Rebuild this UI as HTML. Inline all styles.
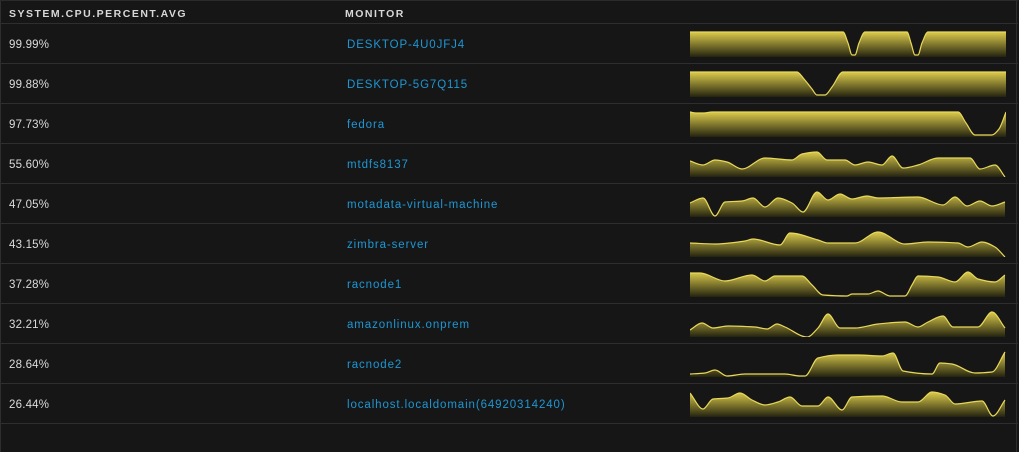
<!DOCTYPE html>
<html><head><meta charset="utf-8"><style>
html,body{margin:0;padding:0;background:#161616;}
body{width:1019px;height:452px;position:relative;overflow:hidden;font-family:"Liberation Sans",sans-serif;}
.frame{position:absolute;left:0;top:0;width:1017px;height:452px;border-left:1px solid #2e2e2e;border-right:1px solid #2e2e2e;box-sizing:border-box;}
.hdr{position:absolute;top:0;left:0;width:1018px;height:24px;border-bottom:1px solid #2e2e2e;box-sizing:border-box;border-top:1px solid #2a2a2a;}
.hdr span{position:absolute;top:7px;font-size:10.5px;font-weight:bold;color:#d8d8d8;letter-spacing:1.5px;}
.row{position:absolute;left:0;width:1018px;height:40px;border-bottom:1px solid #2e2e2e;box-sizing:border-box;}
.v{position:absolute;left:9px;top:15px;font-size:11.5px;color:#dcdcdc;letter-spacing:0.2px;}
.m{position:absolute;left:347px;top:15px;font-size:11.5px;color:#1d97d4;letter-spacing:0.9px;}
svg{position:absolute;left:690px;top:7px;}
</style></head><body>
<svg width="0" height="0" style="position:absolute"><defs><linearGradient id="g" x1="0" y1="0" x2="0" y2="1"><stop offset="0" stop-color="#dccb4c"/><stop offset="1" stop-color="#24230f"/></linearGradient></defs></svg>
<div class="frame"></div>
<div class="hdr"><span style="left:9px">SYSTEM.CPU.PERCENT.AVG</span><span style="left:345px">MONITOR</span></div>

<div class="row" style="top:24px"><div class="v">99.99%</div><div class="m">DESKTOP-4U0JFJ4</div>
<svg width="316" height="26"><polyline data-p="0,1 153,1 158,12 162,24 165,24 169,12 175,1 217,1 221,12 225,24 228,24 232,12 238,1 316,1"/></svg></div>

<div class="row" style="top:64px"><div class="v">99.88%</div><div class="m">DESKTOP-5G7Q115</div>
<svg width="316" height="26"><polyline data-p="0,1 107,1 114,8 122,18 127,24 135,24 142,16 153,1 316,1"/></svg></div>

<div class="row" style="top:104px"><div class="v">97.73%</div><div class="m">fedora</div>
<svg width="316" height="26"><polyline data-p="0,1 6,2 14,2 22,1 268,1 276,12 285,24 302,24 309,18 316,1"/></svg></div>

<div class="row" style="top:144px"><div class="v">55.60%</div><div class="m">mtdfs8137</div>
<svg width="316" height="26"><polyline data-p="0,10 13,14 25,9 37,11 52,18 75,7 102,9 112,3 127,1 137,9 155,9 165,14 178,11 192,14 202,5 213,17 228,14 248,7 280,7 290,18 305,14 315,26"/></svg></div>

<div class="row" style="top:184px"><div class="v">47.05%</div><div class="m">motadata-virtual-machine</div>
<svg width="316" height="26"><polyline data-p="0,12 13,7 25,25 35,11 52,10 63,7 75,16 88,7 102,12 113,21 127,1 138,9 150,3 162,8 177,5 188,7 228,6 253,14 265,6 277,15 290,10 302,15 315,11"/></svg></div>

<div class="row" style="top:224px"><div class="v">43.15%</div><div class="m">zimbra-server</div>
<svg width="316" height="26"><polyline data-p="0,12 25,13 55,10 63,8 90,14 100,2 128,9 138,12 165,12 188,1 215,13 238,11 268,12 278,16 292,11 305,16 315,26"/></svg></div>

<div class="row" style="top:264px"><div class="v">37.28%</div><div class="m">racnode1</div>
<svg width="316" height="26"><polyline data-p="0,2 10,2 35,10 62,4 75,10 85,5 112,5 122,14 133,24 157,25 162,23 178,23 188,20 200,25 215,25 222,14 228,5 248,6 265,11 278,1 288,8 305,11 315,4"/></svg></div>

<div class="row" style="top:304px"><div class="v">32.21%</div><div class="m">amazonlinux.onprem</div>
<svg width="316" height="26"><polyline data-p="0,19 12,12 23,17 38,15 65,16 77,18 87,13 95,16 117,26 128,17 138,3 150,17 165,17 188,13 215,11 228,16 238,11 253,5 263,16 288,16 302,1 315,17"/></svg></div>

<div class="row" style="top:344px"><div class="v">28.64%</div><div class="m">racnode2</div>
<svg width="316" height="26"><polyline data-p="0,23 15,22 25,19 37,25 55,23 82,23 95,23 110,25 115,25 128,7 148,4 168,4 192,5 203,2 213,20 242,23 250,12 262,13 285,22 302,21 315,1"/></svg></div>

<div class="row" style="top:384px"><div class="v">26.44%</div><div class="m">localhost.localdomain(64920314240)</div>
<svg width="316" height="26"><polyline data-p="0,2 13,18 23,8 38,7 50,2 62,9 75,14 88,11 100,6 112,15 128,15 138,6 152,19 162,6 192,5 212,11 228,11 242,1 255,4 265,13 292,10 303,25 315,9"/></svg></div>
<script>
document.querySelectorAll('polyline[data-p]').forEach(function(pl){
  var P=pl.getAttribute('data-p').trim().split(/\s+/).map(function(s){return s.split(',').map(Number);});
  var n=P.length,m=[];
  for(var i=0;i<n;i++){
    if(i==0||i==n-1){var a=P[i==0?0:n-2],b=P[i==0?1:n-1];m.push((b[1]-a[1])/(b[0]-a[0]));continue;}
    var d0=(P[i][1]-P[i-1][1])/(P[i][0]-P[i-1][0]),d1=(P[i+1][1]-P[i][1])/(P[i+1][0]-P[i][0]);
    if(d0*d1<=0)m.push(0);else m.push(2/(1/d0+1/d1));
  }
  var d='M'+P[0][0]+','+P[0][1];
  for(var i=0;i<n-1;i++){
    var dx=(P[i+1][0]-P[i][0])/3;
    d+=' C'+(P[i][0]+dx).toFixed(1)+','+(P[i][1]+m[i]*dx).toFixed(1)+' '+(P[i+1][0]-dx).toFixed(1)+','+(P[i+1][1]-m[i+1]*dx).toFixed(1)+' '+P[i+1][0]+','+P[i+1][1];
  }
  var last=P[n-1],ns='http://www.w3.org/2000/svg';
  var f=document.createElementNS(ns,'path');
  f.setAttribute('d',d+' L'+last[0]+',26 L0,26 Z');f.setAttribute('fill','url(#g)');
  var s=document.createElementNS(ns,'path');
  s.setAttribute('d',d);s.setAttribute('fill','none');s.setAttribute('stroke','#e8d85a');s.setAttribute('stroke-width','1.2');
  pl.parentNode.appendChild(f);pl.parentNode.appendChild(s);pl.remove();
});
</script>
</body></html>
